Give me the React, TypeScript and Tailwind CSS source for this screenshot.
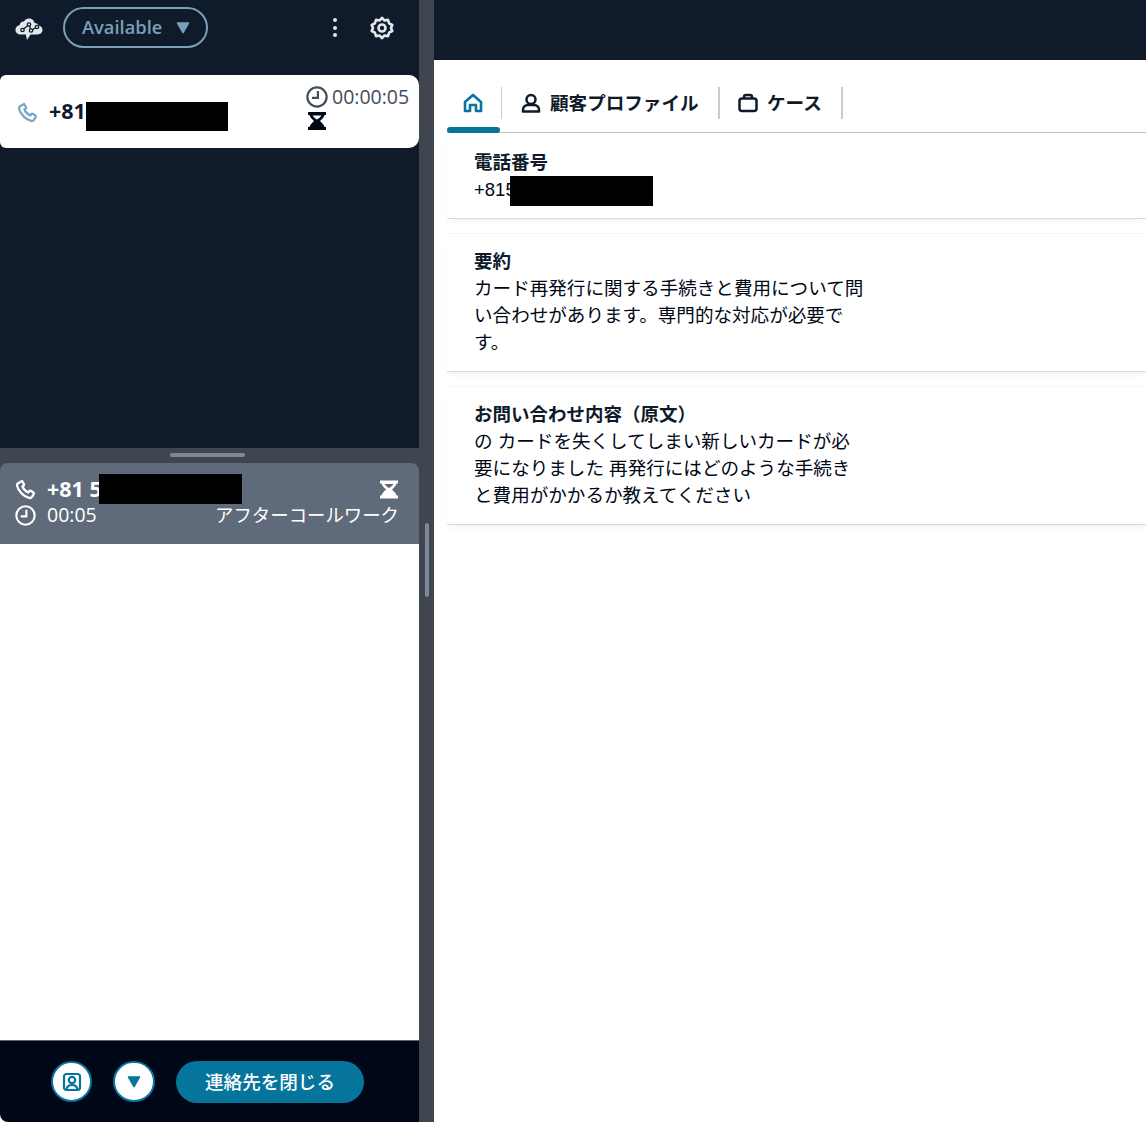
import React from "react";

const jp = '"Noto Sans CJK JP", sans-serif';
const ember = '"Open Sans", "Noto Sans CJK JP", sans-serif';
const helv = '"Liberation Sans", "Noto Sans CJK JP", sans-serif';

function Phone({ className, sw = 2.6 }: { className?: string; sw?: number }) {
  return (
    <svg viewBox="0 0 24 24" fill="none" stroke="currentColor" strokeWidth={sw} strokeLinejoin="round" strokeLinecap="round" className={className}>
      <path d="M7.500 2.500 4 4.500C2.600 5.300 2 6.500 2.400 8c1.600 6 7.500 12 13.600 13.600 1.500.4 2.800-.2 3.600-1.500l1.900-3.300c.3-.5.1-1-.3-1.300l-3.400-2c-.5-.3-1-.2-1.300.2l-1.300 1.700c-3-1.200-5.500-3.700-6.800-6.800l1.700-1.300c.4-.3.5-.8.2-1.300l-2-3.400c-.3-.4-.4-.4-.8-.1Z" />
    </svg>
  );
}

function Clock({ className, sw = 2.400 }: { className?: string; sw?: number }) {
  return (
    <svg viewBox="0 0 24 24" fill="none" stroke="currentColor" strokeWidth={sw} className={className}>
      <circle cx="12" cy="12" r="10.500" />
      <path d="M13 5.500v7.500H6.500" />
    </svg>
  );
}

function Hourglass({ className }: { className?: string }) {
  return (
    <svg viewBox="0 0 18 18" fill="currentColor" className={className}>
      <path d="M0 0h18v3h-1.500c-.5 2.500-3 4.500-4.500 6 1.500 1.500 4 3.500 4.500 6H18v3H0v-3h1.500C2 12.500 4.500 10.500 6 9 4.500 7.500 2 5.500 1.500 3H0V0Zm4.500 3.500C5.200 5 7.500 6.500 9 7.500 10.500 6.500 12.800 5 13.500 3.500h-9Z" />
    </svg>
  );
}

function Redact({ className }: { className: string }) {
  return <div className={`absolute bg-black ${className}`} />;
}

function Section({ title, lines }: { title: string; lines: string[] }) {
  return (
    <section className="pl-[27px] pb-[15px] border-b border-[#d8dadc] shadow-[0_4px_6px_-2px_rgba(0,7,22,0.06)] border-t-[#f6f6f6] border-t">
      <div className="text-[18.500px] leading-[26px] font-bold text-[#0f1b2a] pt-[15px] whitespace-nowrap">{title}</div>
      {lines.map((l) => (
        <div key={l} className="text-[18.570px] leading-[27px] text-[#000716] whitespace-nowrap">{l}</div>
      ))}
    </section>
  );
}

export default function App() {
  return (
    <div className="flex w-[1146px] h-[1122px] overflow-hidden bg-white">
      {/* left column */}
      <div className="w-[419px] flex flex-col shrink-0" style={{ fontFamily: ember }}>
        <div className="h-[448px] bg-[#0f1b2a] flex flex-col">
          <header className="h-[55px] pl-[15px] flex items-center">
            <svg viewBox="0 0 28 26" className="w-[28px] h-[26px] text-[#e4e7ea] mt-[1px]">
              <path fill="currentColor" d="M6 19.500c-3.300 0-5.500-2-5.500-4.800 0-2.400 1.700-4.200 4-4.500C5 7.700 7 6.200 9 6.600 10.200 4 12.500 3 15 3.500c2.500.5 4.200 2.300 4.500 4.500 1.800-.2 3.500.8 4 2.500 2.400.3 4 2 4 4.300 0 2.800-2.200 4.700-5 4.700H15.500L12 25l-1.200-5.500H6Z" />
              <g stroke="#0f1b2a" strokeWidth="1.300" fill="#e4e7ea">
                <path d="m8 14.500 6-5 2 6 6-3.500" fill="none" />
                <circle cx="7.500" cy="15" r="1.700" />
                <circle cx="14" cy="9.500" r="1.700" />
                <circle cx="16" cy="15.500" r="1.700" />
                <circle cx="22" cy="12" r="1.700" />
              </g>
            </svg>
            <button className="ml-[20px] w-[145px] h-[41px] rounded-full border-2 border-[#7c9fb8] flex items-center text-[#7c9fb8] text-[18.300px] font-semibold pl-[17px]">
              <span className="-mt-[2px]">Available</span>
              <svg viewBox="0 0 14 12" className="w-[14px] h-[12px] ml-[14px]" fill="currentColor" stroke="currentColor" strokeWidth="1.500" strokeLinejoin="round"><path d="M1.500 1h11L7 10.500Z" /></svg>
            </button>
            <div className="ml-[125px] flex flex-col gap-[3.500px] w-[4px]">
              <span className="w-[4px] h-[4px] rounded-full bg-[#e4e7ea]" />
              <span className="w-[4px] h-[4px] rounded-full bg-[#e4e7ea]" />
              <span className="w-[4px] h-[4px] rounded-full bg-[#e4e7ea]" />
            </div>
            <svg viewBox="0 0 24 24" fill="none" stroke="#e4e7ea" strokeWidth="2.600" strokeLinejoin="round" className="w-[24px] h-[24px] ml-[33px]">
              <circle cx="12" cy="12" r="3.500" />
              <path d="M12 1.800 14.500 4.500 18 3.900 19.100 7.400 22.300 9 21 12l1.300 3-3.200 1.600L18 20.100l-3.500-.6L12 22.200l-2.500-2.700-3.500.6-1.100-3.500L1.700 15 3 12 1.700 9l3.200-1.600L6 3.900l3.500.6L12 1.800Z" />
            </svg>
          </header>
          <div className="relative mt-[20px] h-[73px] bg-white rounded-r-[10px] rounded-l-[6px] flex items-center pl-[17px]">
            <Phone className="w-[21px] h-[21px] text-[#7ca7c4] mt-[1px]" />
            <span className="ml-[11px] text-[21.500px] font-bold text-[#0f1b2a]">+81</span>
            <Redact className="left-[86px] top-[27px] w-[142px] h-[29px]" />
            <div className="ml-auto mr-[9px] mt-[-7px] w-[104px] flex flex-col shrink-0">
              <div className="flex items-center h-[22px] whitespace-nowrap">
                <Clock className="w-[22px] h-[22px] text-[#414d5c]" sw={2.400} />
                <span className="ml-[4px] text-[19.500px] text-[#414d5c]">00:00:05</span>
              </div>
              <Hourglass className="w-[18px] h-[18px] text-[#000716] ml-[2px] mt-[4px]" />
            </div>
          </div>
        </div>
        <div className="h-[15px] bg-[#3f4650] flex items-center justify-center">
          <div className="w-[75px] h-[4px] rounded-full bg-[#7d8998] -mt-[1px] ml-[-4px]" />
        </div>
        <div className="relative h-[81px] bg-[#3f4650]">
          <div className="h-full bg-[#5f6b7a] text-white rounded-t-[8px] px-[15px] pt-[11px]">
            <div className="flex items-center h-[30px]">
              <Phone className="w-[21px] h-[21px]" />
              <span className="ml-[11px] text-[21.500px] font-bold">+81 5</span>
              <Hourglass className="ml-auto mr-[6px] w-[18px] h-[19px]" />
            </div>
            <Redact className="left-[99px] top-[11px] w-[143px] h-[30px]" />
            <div className="flex items-center h-[26px] -mt-[2px]">
              <Clock className="w-[21px] h-[21px]" />
              <span className="ml-[11px] text-[19.500px]">00:05</span>
              <span className="ml-auto mr-[5px] text-[18.400px]" style={{ fontFamily: jp }}>アフターコールワーク</span>
            </div>
          </div>
        </div>
        <div className="flex-1 bg-white" />
        <footer className="h-[82px] bg-[#000716] rounded-bl-[8px] flex items-center pl-[51px] border-t border-[#e9ebed]/40">
          <button className="w-[41px] h-[41px] rounded-full bg-white border-2 border-[#06759c] flex items-center justify-center text-[#06759c]">
            <svg viewBox="0 0 20 20" fill="none" stroke="currentColor" strokeWidth="2.200" className="w-[20px] h-[20px]">
              <rect x="2" y="2" width="16" height="16" rx="2.500" />
              <circle cx="10" cy="8" r="3.200" />
              <path d="M4.500 17.500c.5-3 2.500-4.500 5.500-4.500s5 1.500 5.500 4.500" />
            </svg>
          </button>
          <button className="ml-[21px] w-[42px] h-[41px] rounded-full bg-white border-2 border-[#06759c] flex items-center justify-center text-[#06759c]">
            <svg viewBox="0 0 14 12" className="w-[14px] h-[12px]" fill="currentColor" stroke="currentColor" strokeWidth="1.500" strokeLinejoin="round"><path d="M1.500 1h11L7 10.500Z" /></svg>
          </button>
          <button className="ml-[21px] w-[188px] h-[42px] pb-[2px] rounded-full bg-[#06759c] text-white text-[18.570px] font-medium" style={{ fontFamily: jp }}>
            連絡先を閉じる
          </button>
        </footer>
      </div>

      {/* divider */}
      <div className="w-[15px] shrink-0 bg-[#3f4650] flex flex-col items-center pt-[523px]">
        <div className="w-[4px] h-[74px] rounded-full bg-[#7d8998]" />
      </div>

      {/* right column */}
      <div className="flex-1 flex flex-col min-w-0" style={{ fontFamily: helv }}>
        <div className="h-[60px] bg-[#0f1b2a]" />
        <div className="pl-[13px]">
          <nav className="relative h-[73px] border-b border-[#b6bec9] flex items-center pt-[14px] text-[#0f1b2a]" style={{ fontFamily: jp }}>
            <div className="w-[55px] h-[32px] flex items-center justify-center border-r border-[#c6ccd4] pr-[2px]">
              <svg viewBox="0 0 20 20" fill="none" stroke="#06759c" strokeWidth="2.600" strokeLinejoin="round" className="w-[20px] h-[20px]">
                <path d="M2 9 10 2l8 7v9h-5v-6H7v6H2V9Z" />
              </svg>
            </div>
            <div className="absolute left-0 bottom-[-1px] w-[53px] h-[6px] rounded-full bg-[#06759c]" />
            <div className="w-[218px] h-[32px] flex items-center border-r-2 border-[#c6ccd4] pl-[19px]">
              <svg viewBox="0 0 20 20" fill="none" stroke="currentColor" strokeWidth="2.500" className="w-[20px] h-[20px]">
                <circle cx="10" cy="6.500" r="4.500" />
                <path d="M2 18.500v-1.500c0-3 2-5 5-5h6c3 0 5 2 5 5v1.500H2Z" strokeLinejoin="round" />
              </svg>
              <span className="ml-[9px] text-[18.570px] font-bold whitespace-nowrap -mt-[2px]">顧客プロファイル</span>
            </div>
            <div className="w-[123px] h-[32px] flex items-center border-r-2 border-[#c6ccd4] pl-[18px]">
              <svg viewBox="0 0 20 20" fill="none" stroke="currentColor" strokeWidth="2.500" strokeLinejoin="round" className="w-[20px] h-[20px]">
                <rect x="1.500" y="5.500" width="17" height="12.500" rx="2.500" />
                <path d="M6 5.500V4a2 2 0 0 1 2-2h4a2 2 0 0 1 2 2v1.500" />
              </svg>
              <span className="ml-[9px] text-[18.570px] font-bold whitespace-nowrap -mt-[2px]">ケース</span>
            </div>
          </nav>
          <div className="relative pl-[27px] pt-[15px] pb-[13px] border-b border-[#d8dadc] shadow-[0_4px_6px_-2px_rgba(0,7,22,0.06)]">
            <div className="text-[18.500px] leading-[26px] font-bold text-[#0f1b2a]" style={{ fontFamily: jp }}>電話番号</div>
            <div className="text-[18.500px] leading-[31px] text-[#000716]">+815</div>
            <Redact className="left-[63px] top-[43px] w-[143px] h-[30px]" />
          </div>
          <div className="h-[14px]" />
          <Section title="要約" lines={["カード再発行に関する手続きと費用について問", "い合わせがあります。専門的な対応が必要で", "す。"]} />
          <div className="h-[14px]" />
          <Section title="お問い合わせ内容（原文）" lines={["の カードを失くしてしまい新しいカードが必", "要になりました 再発行にはどのような手続き", "と費用がかかるか教えてください"]} />
        </div>
        <div className="flex-1" />
      </div>
    </div>
  );
}
